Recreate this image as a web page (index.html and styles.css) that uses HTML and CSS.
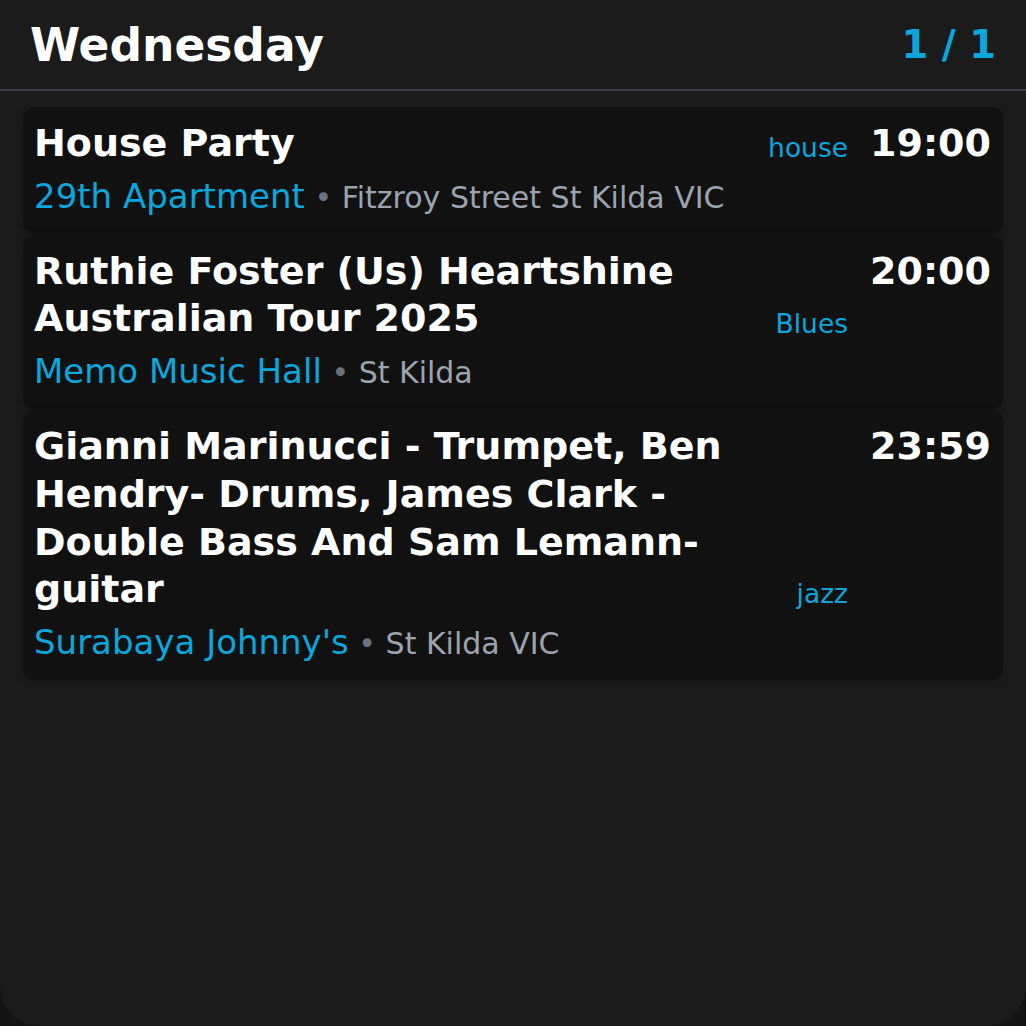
FILE: index.html
```html
<!DOCTYPE html>
<html lang="en">
<head>
    <meta charset="UTF-8">
    <meta name="viewport" content="width=device-width, initial-scale=1.0">
    <title>Gigs - Wednesday</title>
    <link rel="stylesheet" href="styles.css">
</head>
<body>
    <div class="screen">
        <header class="day-header">
            <h1 class="day-title">Wednesday</h1>
            <div class="page-count">1 / 1</div>
        </header>

        <div class="gig-list">
            <div class="gig">
                <div class="gig-top">
                    <div class="gig-name">House Party</div>
                    <div class="gig-genre">house</div>
                    <div class="gig-time">19:00</div>
                </div>
                <div class="gig-place">
                    <span class="venue">29th Apartment</span> <span class="dot">•</span> <span class="address">Fitzroy Street St Kilda VIC</span>
                </div>
            </div>

            <div class="gig">
                <div class="gig-top">
                    <div class="gig-name">Ruthie Foster (Us) Heartshine Australian Tour 2025</div>
                    <div class="gig-genre">Blues</div>
                    <div class="gig-time">20:00</div>
                </div>
                <div class="gig-place">
                    <span class="venue">Memo Music Hall</span> <span class="dot">•</span> <span class="address">St Kilda</span>
                </div>
            </div>

            <div class="gig">
                <div class="gig-top">
                    <div class="gig-name">Gianni Marinucci - Trumpet, Ben Hendry- Drums, James Clark - Double Bass And Sam Lemann-guitar</div>
                    <div class="gig-genre">jazz</div>
                    <div class="gig-time">23:59</div>
                </div>
                <div class="gig-place">
                    <span class="venue">Surabaya Johnny's</span> <span class="dot">•</span> <span class="address">St Kilda VIC</span>
                </div>
            </div>
        </div>
    </div>
</body>
</html>
```

FILE: styles.css
```css
html, body {
    margin: 0;
    padding: 0;
    background-color: #141414;
}
body {
    font-family: 'DejaVu Sans', 'Liberation Sans', sans-serif;
    color: #fff;
}
.screen {
    width: 1026px;
    height: 1026px;
    box-sizing: border-box;
    background-color: #1b1b1b;
    border-radius: 0 0 40px 40px;
    overflow: hidden;
}
.day-header {
    display: flex;
    justify-content: space-between;
    align-items: center;
    height: 91px;
    padding: 2px 30px 0 30px;
    border-bottom: 2px solid #3a404c;
    box-sizing: border-box;
}
.day-title {
    margin: 0;
    font-size: 45.5px;
    font-weight: bold;
    line-height: 1;
}
.page-count {
    font-size: 38.5px;
    font-weight: bold;
    color: #0aa6dc;
    line-height: 1;
}
.gig-list {
    display: flex;
    flex-direction: column;
    gap: 1px;
    padding: 16px 23px 0 23px;
}
.gig {
    background-color: #111111;
    border-radius: 12px;
    padding: 13px 12px 12px 11px;
    box-shadow: 0 2px 8px rgba(0, 0, 0, 0.2);
}
.gig-top {
    display: flex;
    align-items: flex-start;
}
.gig-name {
    flex: 1;
    font-size: 38px;
    font-weight: bold;
    line-height: 47.7px;
    padding-right: 20px;
}
.gig-genre {
    align-self: flex-end;
    font-size: 26.5px;
    color: #0aa6dc;
    line-height: 1;
    padding-bottom: 6px;
    margin-right: 22px;
}
.gig-time {
    font-size: 38px;
    font-weight: bold;
    line-height: 47.7px;
}
.gig-place {
    margin-top: 6px;
    font-size: 30px;
    line-height: 48px;
    white-space: nowrap;
}
.venue {
    font-size: 34px;
    line-height: 1;
    color: #0aa6dc;
}
.dot {
    line-height: 1;
    color: #6b7280;
}
.address {
    font-size: 30px;
    line-height: 1;
    color: #9ca3af;
}
```
